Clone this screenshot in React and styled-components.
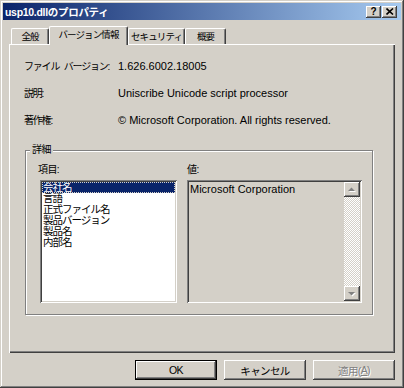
import React from 'react'
import styled, { createGlobalStyle } from 'styled-components'

const GlobalStyle = createGlobalStyle`
  html, body {
    margin: 0;
    padding: 0;
    background: #d4d0c8;
  }
  body {
    font-family: "Liberation Sans", "Noto Sans CJK JP", sans-serif;
    color: #000;
  }
  * {
    box-sizing: border-box;
  }
`;

const Window = styled.div`
    width: 404px;
    height: 388px;
    padding: 3px;
    background: #d4d0c8;
    box-shadow: inset -1px -1px #404040, inset 1px 1px #d4d0c8,
        inset -2px -2px #808080, inset 2px 2px #fff;
    display: flex;
    flex-direction: column;
`;

const TitleBar = styled.div`
    height: 17px;
    display: flex;
    align-items: center;
    padding: 0 4px 0 2px;
    background: linear-gradient(to right, #0a246a, #a6caf0);
    color: #fff;
    font-weight: bold;
    font-size: 10.5px;
    letter-spacing: -0.3px;
    white-space: nowrap;
`;

const CaptionButtons = styled.div`
    margin-left: auto;
    display: flex;
    gap: 1px;
`;

const CaptionButton = styled.div`
    width: 15px;
    height: 12px;
    background: #d4d0c8;
    box-shadow: inset -1px -1px #404040, inset 1px 1px #fff, inset -2px -2px #808080;
    display: flex;
    align-items: center;
    justify-content: center;
    color: #000;
    font-size: 10px;
    font-weight: bold;
    padding-bottom: 1px;
`;

const Body = styled.div`
    flex: 1;
    display: flex;
    flex-direction: column;
    padding: 0 6px;
`;

const TabRow = styled.div`
    margin-top: 6px;
    height: 18px;
    display: flex;
    align-items: flex-end;
    padding-left: 2px;
    position: relative;
    z-index: 1;
`;

const Tab = styled.div`
    width: ${p => p.$w}px;
    height: ${p => (p.$active ? 19 : 16)}px;
    margin-bottom: ${p => (p.$active ? -1 : 0)}px;
    background: #d4d0c8;
    border-top: 1px solid #fff;
    border-left: 1px solid #fff;
    border-right: 1px solid #404040;
    border-radius: 2px 2px 0 0;
    box-shadow: inset -1px 0 #808080;
    display: flex;
    justify-content: center;
    padding-top: 1px;
    font-size: 9.5px;
    letter-spacing: -0.9px;
    line-height: 13px;
    white-space: nowrap;
`;

const Panel = styled.div`
    height: 309px;
    padding: 8px 0 0 15px;
    box-shadow: inset 1px 1px #fff, inset -1px -1px #404040, inset -2px -2px #808080;
    display: flex;
    flex-direction: column;
`;

const InfoRow = styled.div`
    height: 27px;
    display: flex;
    align-items: center;
    white-space: nowrap;
`;

const InfoLabel = styled.div`
    width: 94px;
    font-size: 10px;
    letter-spacing: -1.2px;
    word-spacing: 3px;
`;

const InfoValue = styled.div`
    font-size: 11px;
`;

const Group = styled.div`
    position: relative;
    margin: 17px 0 0 1px;
    width: 348px;
    height: 165px;
    border: 1px solid #808080;
    box-shadow: inset 1px 1px #fff, 1px 1px #fff;
    padding: 12px 10px 0 12px;
    display: flex;
    gap: 10px;
`;

const GroupCaption = styled.div`
    position: absolute;
    left: 4px;
    top: -8px;
    padding: 0 2px;
    background: #d4d0c8;
    font-size: 10px;
    letter-spacing: -0.6px;
    line-height: 14px;
`;

const Column = styled.div`
    width: ${p => p.$w}px;
    display: flex;
    flex-direction: column;
`;

const FieldLabel = styled.div`
    height: 14px;
    margin-bottom: 3px;
    font-size: 10px;
    line-height: 14px;
    letter-spacing: -0.6px;
`;

const Sunken = styled.div`
    height: 123px;
    box-shadow: inset 1px 1px #808080, inset -1px -1px #fff,
        inset 2px 2px #404040, inset -2px -2px #d4d0c8;
    padding: 2px;
`;

const ListBox = styled(Sunken)`
    margin-left: 2px;
    background: #fff;
`;

const ListItem = styled.div`
    height: 11px;
    line-height: 11px;
    padding-left: 1px;
    font-size: 10.5px;
    letter-spacing: -1px;
    white-space: nowrap;
    background: ${p => (p.$selected ? '#0a246a' : 'transparent')};
    color: ${p => (p.$selected ? '#fff' : '#000')};
    outline: ${p => (p.$selected ? '1px dotted #d4d0c8' : 'none')};
    outline-offset: -1px;
`;

const ValueBox = styled(Sunken)`
    background: #d4d0c8;
    display: flex;
`;

const ValueText = styled.div`
    flex: 1;
    padding: 1px 0 0 1px;
    font-size: 11px;
    white-space: nowrap;
`;

const ScrollBar = styled.div`
    width: 16px;
    display: flex;
    flex-direction: column;
`;

const ScrollButton = styled.div`
    width: 16px;
    height: 15px;
    background: #d4d0c8;
    box-shadow: inset -1px -1px #404040, inset 1px 1px #fff, inset -2px -2px #808080;
    display: flex;
    align-items: center;
    justify-content: center;
`;

const ScrollTrack = styled.div`
    flex: 1;
    background-image: conic-gradient(#fff 25%, #d4d0c8 0 50%, #fff 0 75%, #d4d0c8 0);
    background-size: 2px 2px;
`;

const ButtonRow = styled.div`
    margin-top: 7px;
    display: flex;
    justify-content: flex-end;
    gap: 7px;
`;

const DialogButton = styled.div`
    width: 82px;
    height: 20px;
    background: #d4d0c8;
    border: ${p => (p.$default ? '1px solid #000' : 'none')};
    box-shadow: inset -1px -1px #404040, inset 1px 1px #fff, inset -2px -2px #808080;
    display: flex;
    align-items: center;
    justify-content: center;
    font-size: 10.5px;
    letter-spacing: -0.6px;
    color: ${p => (p.$disabled ? '#808080' : '#000')};
    text-shadow: ${p => (p.$disabled ? '1px 1px #fff' : 'none')};
    & u {
        text-decoration: underline;
    }
`;

const Arrow = ({ up }) => (
    <svg width="8" height="6" viewBox="0 0 8 6">
        <polygon
            points={up ? '3.5,0.5 7,4 0,4' : '0,1 7,1 3.5,4.5'}
            fill="#fff"
            transform="translate(1,1)"
        />
        <polygon points={up ? '3.5,0.5 7,4 0,4' : '0,1 7,1 3.5,4.5'} fill="#808080" />
    </svg>
);

const App = () => {
    const items = ['会社名', '言語', '正式ファイル名', '製品バージョン', '製品名', '内部名'];
    const tabs = [
        { label: '全般', w: 38 },
        { label: 'バージョン情報', w: 79, active: true },
        { label: 'セキュリティ', w: 57 },
        { label: '概要', w: 41 },
    ];

    return (
        <>
            <GlobalStyle />
            <Window>
                <TitleBar>
                    <span>usp10.dllのプロパティ</span>
                    <CaptionButtons>
                        <CaptionButton>?</CaptionButton>
                        <CaptionButton>
                            <svg width="8" height="7" viewBox="0 0 8 7">
                                <path d="M0.5 0.5 L7 6.5 M7 0.5 L0.5 6.5" stroke="#000" strokeWidth="1.6" />
                            </svg>
                        </CaptionButton>
                    </CaptionButtons>
                </TitleBar>
                <Body>
                    <TabRow>
                        {tabs.map(t => (
                            <Tab key={t.label} $w={t.w} $active={t.active}>{t.label}</Tab>
                        ))}
                    </TabRow>
                    <Panel>
                        <InfoRow>
                            <InfoLabel>ファイル バージョン:</InfoLabel>
                            <InfoValue>1.626.6002.18005</InfoValue>
                        </InfoRow>
                        <InfoRow>
                            <InfoLabel>説明:</InfoLabel>
                            <InfoValue>Uniscribe Unicode script processor</InfoValue>
                        </InfoRow>
                        <InfoRow>
                            <InfoLabel>著作権:</InfoLabel>
                            <InfoValue>© Microsoft Corporation. All rights reserved.</InfoValue>
                        </InfoRow>
                        <Group>
                            <GroupCaption>詳細</GroupCaption>
                            <Column $w={139}>
                                <FieldLabel>項目:</FieldLabel>
                                <ListBox>
                                    {items.map((it, i) => (
                                        <ListItem key={it} $selected={i === 0}>{it}</ListItem>
                                    ))}
                                </ListBox>
                            </Column>
                            <Column $w={175}>
                                <FieldLabel>値:</FieldLabel>
                                <ValueBox>
                                    <ValueText>Microsoft Corporation</ValueText>
                                    <ScrollBar>
                                        <ScrollButton><Arrow up /></ScrollButton>
                                        <ScrollTrack />
                                        <ScrollButton><Arrow /></ScrollButton>
                                    </ScrollBar>
                                </ValueBox>
                            </Column>
                        </Group>
                    </Panel>
                    <ButtonRow>
                        <DialogButton $default>OK</DialogButton>
                        <DialogButton>キャンセル</DialogButton>
                        <DialogButton $disabled>適用(<u>A</u>)</DialogButton>
                    </ButtonRow>
                </Body>
            </Window>
        </>
    )
}

export default App
